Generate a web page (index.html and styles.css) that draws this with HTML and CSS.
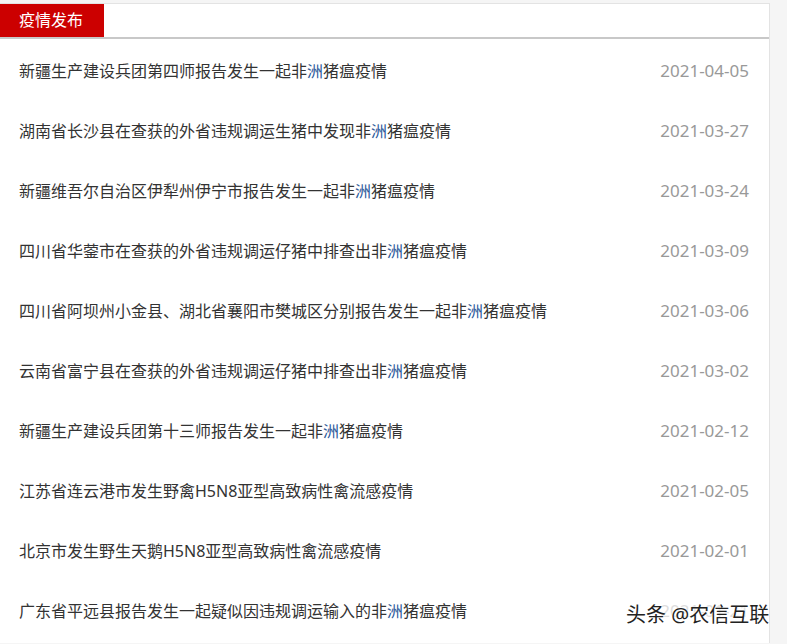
FILE: index.html
```html
<!DOCTYPE html>
<html lang="zh-CN">
<head>
  <meta charset="UTF-8">
  <title>疫情发布</title>
  <link rel="stylesheet" href="styles.css">
</head>
<body>
  <div class="panel">
    <div class="panel-head">
      <span class="tab">疫情发布</span>
    </div>
    <ul class="news-list">
      <li><span class="title">新疆生产建设兵团第四师报告发生一起非<em>洲</em>猪瘟疫情</span><span class="date">2021-04-05</span></li>
      <li><span class="title">湖南省长沙县在查获的外省违规调运生猪中发现非<em>洲</em>猪瘟疫情</span><span class="date">2021-03-27</span></li>
      <li><span class="title">新疆维吾尔自治区伊犁州伊宁市报告发生一起非<em>洲</em>猪瘟疫情</span><span class="date">2021-03-24</span></li>
      <li><span class="title">四川省华蓥市在查获的外省违规调运仔猪中排查出非<em>洲</em>猪瘟疫情</span><span class="date">2021-03-09</span></li>
      <li><span class="title">四川省阿坝州小金县、湖北省襄阳市樊城区分别报告发生一起非<em>洲</em>猪瘟疫情</span><span class="date">2021-03-06</span></li>
      <li><span class="title">云南省富宁县在查获的外省违规调运仔猪中排查出非<em>洲</em>猪瘟疫情</span><span class="date">2021-03-02</span></li>
      <li><span class="title">新疆生产建设兵团第十三师报告发生一起非<em>洲</em>猪瘟疫情</span><span class="date">2021-02-12</span></li>
      <li><span class="title">江苏省连云港市发生野禽H5N8亚型高致病性禽流感疫情</span><span class="date">2021-02-05</span></li>
      <li><span class="title">北京市发生野生天鹅H5N8亚型高致病性禽流感疫情</span><span class="date">2021-02-01</span></li>
      <li><span class="title">广东省平远县报告发生一起疑似因违规调运输入的非<em>洲</em>猪瘟疫情</span><span class="date faint">2021-01-21</span></li>
    </ul>
    <div class="watermark">头条 @农信互联</div>
  </div>
</body>
</html>
```

FILE: styles.css
```css
body {
  margin: 0;
  background: #f5f5f5;
  font-family: 'Noto Sans', 'Noto Sans CJK SC', sans-serif;
  overflow: hidden;
}
.panel {
  position: relative;
  width: 770px;
  height: 640px;
  box-sizing: border-box;
  margin-top: 3px;
  background: #fff;
  border-top: 1px solid #e3e3e3;
  border-right: 1px solid #e3e3e3;
  overflow: hidden;
}
.panel-head {
  height: 33px;
  border-bottom: 2px solid #c8c8c8;
}
.tab {
  display: inline-block;
  width: 104px;
  height: 33px;
  box-sizing: border-box;
  padding-left: 19px;
  background: #cc0000;
  color: #fff;
  font-size: 16px;
  line-height: 33px;
}
.news-list {
  list-style: none;
  margin: 0;
  padding: 1px 0 0;
}
.news-list li {
  display: flex;
  justify-content: space-between;
  align-items: center;
  height: 60px;
  padding: 0 20px 0 19px;
  font-size: 16px;
}
.title {
  color: #333;
}
.title em {
  font-style: normal;
  color: #2d5a9a;
}
.date {
  color: #999;
  font-size: 17px;
}
.date.faint {
  color: #ddd;
}
.watermark {
  position: absolute;
  left: 626px;
  top: 595px;
  font-size: 20px;
  color: #222;
  text-shadow: 0 0 2px #fff, 0 0 2px #fff;
  white-space: nowrap;
}
```
